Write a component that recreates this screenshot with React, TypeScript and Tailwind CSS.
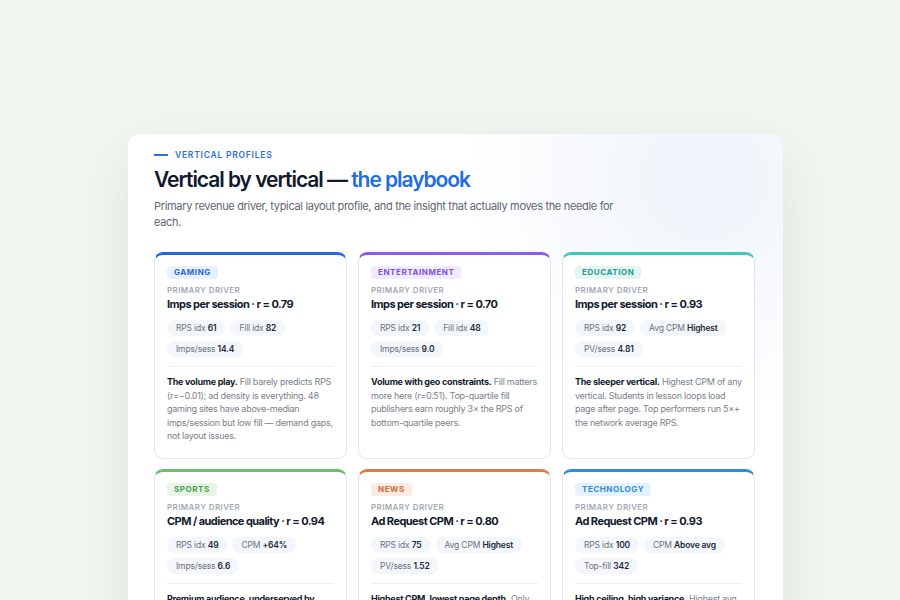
type Stat = { label: string; value: string };

type Vertical = {
    name: string;
    bar: string;
    badge: string;
    driver: string;
    stats: Stat[];
    lead: string;
    body: string;
};

const verticals: Vertical[] = [
    {
        name: 'GAMING',
        bar: 'border-t-[#2567e0]',
        badge: 'bg-[#e8effd] text-[#2567e0]',
        driver: 'Imps per session · r = 0.79',
        stats: [
            { label: 'RPS idx', value: '61' },
            { label: 'Fill idx', value: '82' },
            { label: 'Imps/sess', value: '14.4' }
        ],
        lead: 'The volume play.',
        body: 'Fill barely predicts RPS (r=−0.01); ad density is everything. 48 gaming sites have above-median imps/session but low fill — demand gaps, not layout issues.'
    },
    {
        name: 'ENTERTAINMENT',
        bar: 'border-t-[#8a5cf0]',
        badge: 'bg-[#f1ebfe] text-[#7e4fe6]',
        driver: 'Imps per session · r = 0.70',
        stats: [
            { label: 'RPS idx', value: '21' },
            { label: 'Fill idx', value: '48' },
            { label: 'Imps/sess', value: '9.0' }
        ],
        lead: 'Volume with geo constraints.',
        body: 'Fill matters more here (r=0.51). Top-quartile fill publishers earn roughly 3× the RPS of bottom-quartile peers.'
    },
    {
        name: 'EDUCATION',
        bar: 'border-t-[#3cc8bb]',
        badge: 'bg-[#e4f6f3] text-[#1f9a8c]',
        driver: 'Imps per session · r = 0.93',
        stats: [
            { label: 'RPS idx', value: '92' },
            { label: 'Avg CPM', value: 'Highest' },
            { label: 'PV/sess', value: '4.81' }
        ],
        lead: 'The sleeper vertical.',
        body: 'Highest CPM of any vertical. Students in lesson loops load page after page. Top performers run 5×+ the network average RPS.'
    },
    {
        name: 'SPORTS',
        bar: 'border-t-[#6cbd6c]',
        badge: 'bg-[#e7f4e6] text-[#4f9d4f]',
        driver: 'CPM / audience quality · r = 0.94',
        stats: [
            { label: 'RPS idx', value: '49' },
            { label: 'CPM', value: '+64%' },
            { label: 'Imps/sess', value: '6.6' }
        ],
        lead: 'Premium audience, underserved by volume.',
        body: '+64% CPM premium over median, but sessions end early. More slots per page is the lever.'
    },
    {
        name: 'NEWS',
        bar: 'border-t-[#e07a48]',
        badge: 'bg-[#fcebe2] text-[#d2693c]',
        driver: 'Ad Request CPM · r = 0.80',
        stats: [
            { label: 'RPS idx', value: '75' },
            { label: 'Avg CPM', value: 'Highest' },
            { label: 'PV/sess', value: '1.52' }
        ],
        lead: 'Highest CPM, lowest page depth.',
        body: 'Only 1.52 pages per session. Revenue is won or lost on the first page view.'
    },
    {
        name: 'TECHNOLOGY',
        bar: 'border-t-[#2b8fdc]',
        badge: 'bg-[#e5f1fc] text-[#2b8fdc]',
        driver: 'Ad Request CPM · r = 0.93',
        stats: [
            { label: 'RPS idx', value: '100' },
            { label: 'CPM', value: 'Above avg' },
            { label: 'Top-fill', value: '342' }
        ],
        lead: 'High ceiling, high variance.',
        body: 'Highest avg RPS index (100) but median sits at 31. A few outliers carry the vertical.'
    }
];

function VerticalCard({ v }: { v: Vertical }) {
    return (
        <div
            className={`flex flex-col items-start rounded-[9px] border border-[#e3e6ec] border-t-[3px] bg-white px-[12px] pt-[11px] pb-[15px] ${v.bar}`}
        >
            <span
                className={`rounded-[4px] px-[7px] text-[8px] leading-[13px] font-bold tracking-[0.07em] ${v.badge}`}
            >
                {v.name}
            </span>
            <div className="mt-[6px] text-[8px] leading-[11px] font-semibold tracking-[0.05em] text-[#a3a9b4]">
                PRIMARY DRIVER
            </div>
            <div className="mt-[1px] text-[11px] leading-[14px] font-bold tracking-[-0.05em] text-[#111a2b]">
                {v.driver}
            </div>
            <div className="mt-[9px] flex flex-wrap gap-x-[5px] gap-y-[5px]">
                {v.stats.map((s) => (
                    <span
                        key={s.label}
                        className="rounded-full bg-[#f3f6fb] px-[9px] text-[8.5px] leading-[16px] tracking-[-0.02em] text-[#6b7280]"
                    >
                        {s.label} <span className="font-semibold text-[#1f2937]">{s.value}</span>
                    </span>
                ))}
            </div>
            <div className="mt-[9px] w-full border-t border-[#eceef2] pt-[8px] text-[9px] leading-[13.5px] tracking-[-0.03em] text-[#7b818c]">
                <span className="font-bold text-[#111a2b]">{v.lead}</span> {v.body}
            </div>
        </div>
    );
}

export default function App() {
    return (
        <div className="h-[600px] w-[900px] overflow-hidden bg-[#f1f7f1] font-['Inter','Liberation_Sans',sans-serif]">
            <div className="mt-[134px] ml-[128px] w-[655px] rounded-[12px] bg-white bg-[radial-gradient(circle_at_88%_8%,#eef3fa_0%,#ffffff_32%)] pt-[15px] pr-[28px] pb-[30px] pl-[26px] shadow-[0_20px_60px_rgba(60,90,70,0.12)]">
                <div className="flex items-center gap-[7px]">
                    <span className="h-[1.5px] w-[14px] bg-[#2d6fd8]" />
                    <span className="text-[8.5px] leading-[12px] font-semibold tracking-[0.09em] text-[#2d6fd8]">
                        VERTICAL PROFILES
                    </span>
                </div>
                <h1 className="mt-[6px] text-[21px] leading-[26px] font-semibold tracking-[-0.05em] text-[#0f1a2c]">
                    Vertical by vertical — <span className="text-[#1e6ee0]">the playbook</span>
                </h1>
                <p className="mt-[5px] w-[470px] text-[11px] leading-[16px] tracking-[-0.03em] text-[#5f6673]">
                    Primary revenue driver, typical layout profile, and the insight that actually moves the
                    needle for each.
                </p>
                <div className="mt-[22px] grid grid-cols-3 gap-x-[11px] gap-y-[10px]">
                    {verticals.map((v) => (
                        <VerticalCard key={v.name} v={v} />
                    ))}
                </div>
            </div>
        </div>
    );
}
